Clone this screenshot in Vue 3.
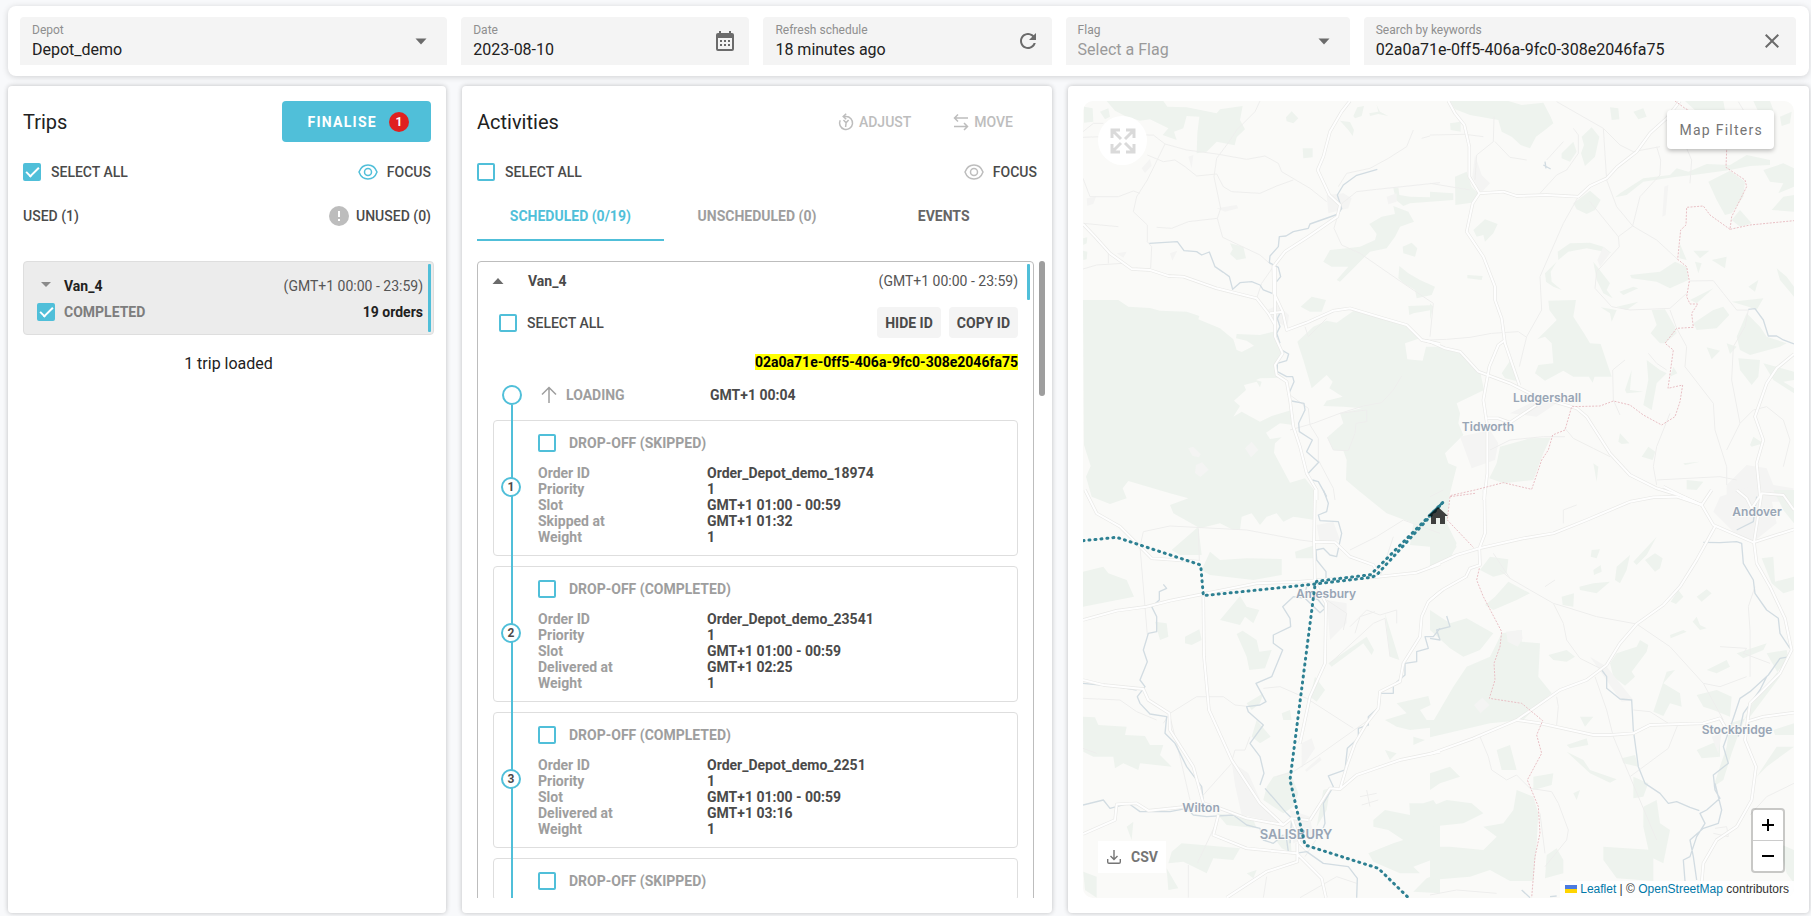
<script setup>
import { ref } from 'vue'

const depot = ref('Depot_demo')
const date = ref('2023-08-10')
const refreshed = ref('18 minutes ago')
const flag = ref('')
const keywords = ref('02a0a71e-0ff5-406a-9fc0-308e2046fa75')
const tripsAll = ref(true)
const tripChecked = ref(true)
const activitiesAll = ref(false)
const vanAll = ref(false)

const steps = ref([
  { n: 1, state: 'SKIPPED', order: 'Order_Depot_demo_18974', verb: 'Skipped at', at: 'GMT+1 01:32', checked: false },
  { n: 2, state: 'COMPLETED', order: 'Order_Depot_demo_23541', verb: 'Delivered at', at: 'GMT+1 02:25', checked: false },
  { n: 3, state: 'COMPLETED', order: 'Order_Depot_demo_2251', verb: 'Delivered at', at: 'GMT+1 03:16', checked: false },
  { n: 4, state: 'SKIPPED', order: '', verb: '', at: '', checked: false },
])

const towns = [
  { name: 'Ludgershall', x: 464, y: 301, size: 12 },
  { name: 'Tidworth', x: 405, y: 330, size: 12 },
  { name: 'Andover', x: 674, y: 415, size: 12 },
  { name: 'Amesbury', x: 243, y: 497, size: 12 },
  { name: 'Stockbridge', x: 654, y: 633, size: 12 },
  { name: 'Wilton', x: 118, y: 711, size: 12 },
  { name: 'SALISBURY', x: 213, y: 738, size: 13 },
]

// Map tiles, each drawn on a grid three times finer than the map's own units.
const tiles = [
  {
    at: 'translate(-23 -21) scale(0.33333)',
    urban: 'M800 345l50 -5 25 15 -10 30 -60 15zM622 690l30 -15 35 30 -5 40 -45 -30zM385 1105l15-5 22 22-5 10-20-5zM555 1105l20-20 20 25-22 22zM408 1155l18-8 20 22-25 22-16-12zM80 355l28-5-8 22-18 5zM245 265l25-28 5 20-20 22zM470 385l60-10 5 10-40 10zM170 520l30-5-10 18zM330 520l22-8-15 30zM980 350l30-10 0 25-25 8zM385 230l15-5-5 40z',
    wood: 'M140 63L310 63L322 80L380 82L470 100L480 88L548 78L540 120L555 148L530 172L524 196L470 185L440 215L410 220L412 160L418 110L380 108L370 145L342 155L350 180L308 165L325 145L270 118L240 122L200 110L165 92ZM72 80L98 85L100 125L72 128ZM120 95L145 85L150 110L135 118ZM678 112L695 94L715 115L700 130L680 124ZM728 205L758 205L758 232L730 235ZM880 108L892 82L912 78L905 108L885 115ZM840 122L870 126L882 150L878 168L865 150ZM928 100L955 95L950 75L960 95L985 108L955 102L930 108ZM928 432L965 410L1005 402L1000 378L1045 395L1062 425L1020 440L1005 470L980 505L930 515L905 540L870 575L840 605L830 600L865 560L815 560L790 545L810 510L860 505L900 500L945 480L950 462ZM1000 325L1015 322L1018 345L1050 350L1110 352L1110 365L1050 370L1030 378L1008 360ZM1028 500L1055 488L1072 505L1065 530L1030 520ZM1018 558L1045 580L1080 600L1125 620L1115 645L1070 655L1065 630L1030 610L1015 595ZM510 490L550 500L558 535L530 540L510 522L518 508ZM722 680L755 650L798 660L785 695L750 695ZM1045 678L1110 676L1115 690L1060 700L1048 705ZM69 475L82 472L80 490L70 495ZM69 512L82 515L80 538L70 540ZM69 660L175 660L205 680L270 684L300 692L380 695L418 708L415 718L480 745L520 778L530 810L545 816L582 797L560 782L528 775L530 762L600 765L640 755L650 770L668 822L643 855L650 880L675 893L600 895L588 900L605 905L600 922L590 905L552 915L558 930L522 962L540 978L520 1010L545 995L600 1025L635 1008L695 990L700 1035L660 1030L618 1058L630 1077L665 1072L645 1090L642 1118L690 1208L735 1195L770 1240L765 1320L700 1310L670 1325L650 1300L620 1310L600 1335L575 1300L545 1310L540 1350L520 1350L480 1330L420 1345L340 1300L330 1275L385 1255L330 1240L205 1203L188 1225L200 1255L150 1272L95 1250L78 1190L92 1158L72 1095ZM712 785L760 740L800 722L830 728L880 693L960 715L1040 738L1080 775L1035 790L1042 838L1088 842L1098 800L1140 800L1200 820L1262 882L1272 930L1190 970L1200 1000L1195 1030L1210 1065L1155 1120L1165 1150L1190 1160L1170 1240L1160 1330L1190 1390L1170 1440L1110 1400L1050 1395L1060 1330L980 1300L900 1235L858 1200L860 1140L850 1112L820 1110L802 1072L850 1030L840 1000L905 985L850 980L790 978L800 962L848 950L808 925L818 905L800 885L755 925L730 840Z',
    lane: 'M69 155L100 130L130 130M69 172L265 165L280 165L315 192L380 210L470 222L560 238L615 228L655 250L665 275L750 325L800 365M600 63L585 95L530 150L500 195L470 235L462 290L482 385L472 415L385 425L335 445L290 442M315 192L262 300L230 350L220 395L262 435L262 485L275 500L272 565M69 295L90 350L175 350L220 333L240 340M262 225L310 245L345 240L375 260L410 288L470 282L490 320L515 335L600 340L650 318L700 300M472 415L488 472L600 525L640 560L605 610L590 655M1110 168L1085 175M1060 150L1040 200L985 235L930 265L860 280L835 320M840 375L890 335L950 328L1140 308M832 410L822 445L845 495L900 520L1030 610L1120 670L1110 770M69 430L175 440M69 567L110 555L190 550M145 520L145 550M690 1050L760 1030L840 1000L910 978L965 968L1000 930L1025 888M690 945L745 985L750 1035L775 1075L775 1140L820 1225L825 1260M735 740L745 770L800 715M802 1072L820 1110L865 1112L885 1060L888 1030L920 1025L920 990L840 1000',
    road: 'M69 432L105 470L150 520L215 567L270 570L325 588L370 590L470 625L590 655L625 700L645 735L645 770L668 820L645 855L650 885L680 905L690 960L700 1040L720 1100L740 1180L770 1230L770 1260M870 63L845 95L810 155L790 230L773 270L808 345L840 375L832 410L745 470L675 515L640 560L642 640L668 695L680 750L740 728L820 692L870 685L960 712L1040 735L1085 780L1140 792M630 700L668 695M645 560L645 735',
    river: 'M952 268L890 286L850 315L832 345L845 385L835 402L750 432L745 445L700 455L678 468L658 470L655 500L630 528L628 548L655 562L662 590L650 605M268 490L352 485L372 512L410 515L425 525L448 516L465 560L490 577L508 590L518 628L540 608L575 605L600 615L610 630L637 640M645 645L665 690L652 715L660 740L650 760L660 790M668 812L686 822L680 842L652 850L652 875L680 890L698 890L702 905L685 945M695 963L732 970L735 990L716 1030L718 1055L757 1080L740 1115L776 1147L745 1180M757 1200L775 1205L800 1250',
    border: '',
  },
  {
    at: 'translate(347 -21) scale(0.33333)',
    urban: 'M135 225l20 60 25 25 -28 30 -25 -50zM703 320l12-5 -8 90 -10 5zM90 1070l90 -20 25 40 -10 50 -70 25zM240 1000l80 -40 60 10 -60 40zM890 1215l60 -60 60 10 20 50 60 10 0 40 -200 0zM520 500l20 20 -30 40-8-20z',
    wood: 'M60 63L235 63L275 75L340 68L362 110L370 130L345 150L318 170L300 205L272 195L245 170L215 155L205 120L120 105L75 88ZM60 130L92 125L92 155L62 150ZM75 290L110 275L125 320L148 345L125 368L76 375ZM0 335L70 340L70 360L0 365ZM395 220L430 185L440 215L420 245L395 235ZM455 170L485 142L508 170L495 230L465 258L453 220L462 195ZM430 370L480 332L512 360L495 390L470 402L440 388ZM540 82L565 85L568 118L545 120ZM610 95L640 85L650 110L625 118ZM765 63L880 63L885 90L800 95ZM970 63L1020 63L1030 90L1015 110L985 95ZM1050 110L1085 95L1080 130L1055 138ZM570 340L640 295L720 285L740 265L775 275L830 252L900 255L950 225L1020 240L1020 255L960 258L900 270L790 285L740 290L640 305L590 345L555 352ZM835 305L900 272L945 305L940 350L905 400L885 405L860 360ZM1000 270L1060 250L1092 265L1092 320L1045 340L1060 310L1020 305ZM1060 350L1092 345L1092 395L1025 390ZM905 420L930 390L965 430L930 440ZM130 450L165 418L203 432L190 460L165 485L160 465L140 470ZM383 515L420 490L480 488L520 500L545 520L470 505L415 515L385 540ZM345 580L380 545L362 575L365 605L395 630L370 620L348 605ZM490 545L540 610L530 630L548 655L520 640L500 600ZM568 635L610 620L625 625L580 645ZM600 585L690 575L735 545L770 560L775 600L720 625L680 605L605 595ZM560 680L625 665L590 690ZM355 662L438 660L430 710L462 760L480 790L512 792L545 890L430 890L400 872L345 902L315 880L325 855L370 850L365 790L345 770L322 778L360 740L380 720L358 690ZM512 682L560 690L545 725L540 700ZM665 690L705 688L735 740L740 760L705 790L690 790L662 760L680 735ZM790 512L838 512L810 535ZM845 540L890 530L885 565ZM795 545L815 550L805 580ZM750 492L770 540L748 535ZM1040 565L1070 590L1092 620L1092 650L1050 600ZM955 620L985 600L975 635ZM905 665L1000 655L980 690L955 680ZM780 660L850 625L800 670ZM790 730L850 690L880 680L898 705L860 745L800 750ZM920 770L950 700L990 740L1010 770L1070 790L1050 800L960 825L930 810ZM925 835L990 840L985 890L965 915L930 870ZM830 802L870 812L845 838ZM890 790L920 800L900 822ZM1000 850L1092 875L1092 900L1060 905L1092 925L1092 940L1030 900ZM650 840L690 870L710 880L680 910L665 990L640 975L655 900ZM720 890L730 860L742 880ZM585 930L605 870L600 930L640 935L590 940ZM430 890L470 862L495 885L488 908L470 880ZM215 880L245 835L268 905L225 895ZM210 1100L300 1075L362 1073L340 1120L310 1200L220 1210L178 1195L200 1150ZM565 1085L570 1060L598 1090L575 1092ZM635 1130L655 1100L676 1115L668 1140ZM760 1150L810 1145L765 1155ZM960 1095L970 1070L1000 1090L965 1100ZM770 1200L820 1205L800 1230L770 1228ZM490 1150L505 1160L500 1205ZM112 585L158 588L155 600L112 595ZM0 670L10 680L0 720Z',
    lane: 'M0 165L105 163L160 170M192 110L190 185L140 225L135 300M195 185L240 232L290 240M400 185L350 240M380 65L450 105L520 145L570 195L610 215L690 200M430 145L445 165L445 220L410 270L380 285L330 340M520 145L530 300L560 380L608 438L565 470L480 365M608 438L630 350L690 285L692 240L680 200M608 438L680 480L745 540M445 350L400 430L330 590L335 690L290 770L268 860M565 470L568 500L500 575L495 625L545 680L600 690L720 685L770 640M0 780L50 778L120 772L185 760L265 755L290 772M778 603L850 602L880 640L920 690L955 690M955 690L945 740L910 800L905 900L930 1030L890 1110M740 745L770 800L765 860L850 970L855 1050L890 1160L890 1215M720 690L740 745M655 820L680 850L710 870M550 960L548 870L585 840M550 960L570 1005M720 1000L680 1100L670 1160L680 1215M930 1030L970 990L1010 980L1060 1020L1080 1080L1060 1160M405 1045L430 1075L490 1105L540 1130M180 1110L240 1080L340 1070L405 1070M680 1200L870 1190L920 1200M770 205L785 240L780 310M0 310L120 330M925 65L940 90',
    road: 'M-12 782L0 785L45 805L90 815L145 875L240 910L320 950L440 985L470 1010L540 1120L600 1185L680 1225L760 1250L815 1275M55 63L75 100L103 135L118 200L118 290L148 340L128 370L110 455L160 530L195 620L195 660L215 715L225 790L268 915M148 340L220 335L260 348L350 345L445 350L480 318L530 295L560 262L620 215L660 160L710 115L750 63M225 780L205 795L178 860L160 960L172 1040L172 1180L162 1260M172 1015L205 1015L240 1028L320 975M1092 822L1040 865L1010 910L975 1010L1000 1080L980 1150L990 1250',
    river: 'M345 245L348 265M340 255L362 267M955 688L975 686L1000 720L1015 768L1040 768L1060 780L1092 792',
    border: 'M735 63L765 85L830 120L890 210L888 262L945 300L950 320L905 410L900 448L960 435L1092 422M900 448L840 405L820 378L770 382L768 435L752 450L743 538L770 560L778 603L770 650L780 672L803 672L785 700L790 742L740 745L705 790L730 810L714 925L758 915L750 965L735 1010L695 1035L640 1005L600 975L550 963L510 978L425 980L405 1050L368 1065L355 1110L335 1140L305 1228L220 1208L135 1230L60 1247',
  },
  {
    at: 'translate(-23 389) scale(0.33333)',
    urban: 'M770 105l50 -10 20 55 -60 10zM515 815l50 35 40 90 60 60 -120 -25 -20 -90zM735 840l45 -40 5 10 -45 35zM800 330l60 10 0 60 -50 50zM690 960l60 20 10 60 -60 20zM725 760l30-15 10 30-40 60z',
    wood: 'M69 245L130 230L145 250L200 270L222 320L69 350ZM335 180L415 110L425 195L360 195ZM425 240L450 185L480 210L560 205L665 207L665 255L580 270L450 255ZM705 185L765 165L765 205L708 205ZM480 390L540 318L560 350L598 360L580 400L555 380L540 405ZM530 432L548 422L590 450L598 485L635 480L615 535L568 540L560 500ZM375 440L418 418L425 450L395 465L375 460ZM285 395L320 400L325 440L300 450ZM805 520L920 440L942 480L935 495L910 460L815 530ZM975 370L1018 510L990 500ZM765 560L795 600L770 635L750 620ZM69 680L105 682L115 705L200 710L195 735L255 738L270 765L310 765L300 795L335 830L240 820L235 840L190 820L165 835L160 800L100 800L70 785ZM590 690L632 740L600 760L575 740ZM560 640L610 610L600 640L575 660ZM665 670L690 660L695 690L670 690ZM640 860L690 845L715 910L700 950L670 970L610 930L620 890ZM790 900L810 895L800 960L770 1010ZM470 970L580 990L590 1015L500 1005ZM640 1040L690 1030L695 1090L665 1075ZM335 1085L365 1060L540 1075L520 1110L460 1105L440 1150L370 1115L325 1120ZM200 1010L220 995L215 1050ZM70 1145L110 1160L110 1223L75 1200ZM320 1135L355 1195L325 1200ZM560 1150L590 1140L580 1165ZM940 990L975 960L1050 975L1048 940L1090 940L1120 930L1140 960L1140 1100L1060 1130L1080 1150L1020 1150L940 1115L925 1090L1000 1060L1030 1050L985 1020L940 1010ZM1010 640L1105 618L1112 645L1080 660L1100 690L1140 690L1140 710L1050 720L1010 710L975 690L1040 670ZM975 780L1010 790L990 810ZM1060 740L1095 750L1060 765ZM1100 1165L1140 1150L1140 1210L1060 1205Z',
    lane: 'M262 435L240 170L250 125L330 108L560 120L720 150L760 155M415 115L418 215M870 180L950 140L1030 90L1140 130M960 262L1000 140M310 700L330 670L410 620L490 620L525 645L570 650M610 595L660 590L740 625L880 715M925 690L770 800L700 845L650 860M430 915L515 820M515 815L525 780L555 780L570 740M69 625L180 630L230 665L290 690M330 680L360 800L390 930M412 1120L475 985M385 1125L385 1223M610 1223L620 1160M735 1100L780 1030M69 775L110 790M870 410L920 360L960 375L1010 360L1010 400M885 430L900 380L945 365M810 520L940 400L975 385L990 500M900 920L950 910M905 945L955 930M920 900L930 950M800 330L860 370L850 420M720 1223L830 1160L890 1180',
    road: 'M69 390L170 362L260 350L330 332L430 312L590 280L720 275L800 268L940 262L1070 248L1140 222M765 0L762 150L765 280L798 340L795 520L750 620L720 760M430 320L432 500L447 660L515 810L600 940L670 1005M69 570L130 585L250 597L265 630L328 670L330 720L400 830L430 940L480 955L560 985L670 1005L695 985L745 990M69 1032L165 990L170 943L230 940L265 962L430 945M75 0L110 70L180 110L240 170L275 205L420 215M760 155L825 157L870 200L940 225L960 262M475 975L460 1035L560 1075L710 1090L785 1165L798 1223M500 1223L620 1145L712 1115L712 1060M1140 305L1105 335L1085 380L1080 440L1030 520L1020 575L960 605L955 655L920 700L885 760L860 830L840 898L810 895L750 990M840 898L890 855L1020 810L1140 785M695 985L720 1060L740 1080',
    river: 'M790 0L805 40L800 65L775 75L780 92L835 95L845 130L830 200L810 195L790 175L768 180L770 210L798 245L798 265M740 290L735 310L775 330L795 355L780 368L735 325L700 320L668 350L690 385L692 410L640 435L640 460L668 480L635 560L588 580L618 635L600 645L560 650L565 665L610 705L570 760L600 800L612 850L600 885M615 895L680 970L695 985L690 1060M310 283L320 295L298 305L298 330L275 350L290 380L290 425L265 430L250 480L262 515L240 570L255 590L232 620L240 640L270 672L320 680L315 730L345 760L380 830L425 890L430 935M69 945L130 930L150 955L205 940L240 965L330 965L380 955L400 975L440 980L520 975L560 1005L600 1015L610 1050L640 1060L670 1035M680 1050L685 1085L705 1090L740 1085L790 1120L865 1130L892 1165L890 1223M1140 415L1120 440L1095 440L1105 475L1070 485L1070 515L1035 520L1035 555L1000 585L1000 610L960 610L958 650L925 680L925 705L895 715L895 745L862 775L855 840L805 858L820 890L790 940L795 1000L780 1040M69 580L170 590L230 600',
    border: '',
  },
  {
    at: 'translate(347 389) scale(0.33333)',
    urban: 'M228 425l45 -5 5 25 -15 25 -30 -15zM132 645l25-22 22 22-28 25zM870 20l90-30 60 20 20 90-70 55-60-30-60-60zM480 500l50 30 80 100 -35 5zM845 740l30-10-10 60z',
    wood: 'M1030 0L1092 0L1092 100L1060 60ZM0 50L50 100L80 170L60 200L0 230ZM180 200L235 208L230 250L190 260L150 240ZM195 320L235 275L300 310L260 330L190 360L165 345ZM0 360L60 400L110 385L190 430L150 480L100 500L60 475L0 420ZM275 420L275 455L330 460L325 560L365 610L330 640L280 690L180 700L0 742L0 710L70 590L110 530L180 500L215 430ZM355 495L410 480L435 500L410 515L370 510ZM395 320L432 310L430 350L398 345ZM448 290L490 280L540 275L500 310L450 300ZM485 180L510 178L500 205L482 200ZM555 270L560 230L600 195L590 240L570 280ZM610 215L680 140L650 195L620 225ZM645 210L675 190L698 205L690 235L675 245ZM490 240L512 225L515 245L492 255ZM800 320L830 298L845 310L815 335ZM788 395L800 380L810 405L830 415L810 420ZM720 435L760 420L770 425L722 445ZM745 300L760 320L738 342L722 335ZM540 520L560 490L620 470L630 450L655 465L650 485L605 545L615 560L585 587L550 560ZM995 205L1030 200L1035 275L1092 260L1092 300L1060 310L1025 280ZM670 665L710 545L735 540L700 580L750 610L755 650L720 640L700 678ZM800 615L860 600L905 620L900 680L850 660L820 650ZM830 540L890 510L900 530L860 550ZM920 490L1010 460L1000 480L940 505ZM960 680L1050 560L1010 490L1070 480L1075 505L960 650L930 720L905 790L880 870L850 890L890 770L900 700ZM800 780L870 750L870 800L815 805ZM410 765L470 745L475 765L420 775ZM410 785L460 810L480 840L560 868L540 878L480 850ZM575 805L615 795L625 830L580 820ZM610 860L655 880L640 920L610 925ZM640 950L680 930L690 1000L720 1020L700 1120L660 1100L640 1010ZM260 900L310 920L325 970L320 1060L310 1173L240 1173L180 1140L120 1160L0 1170L0 1070L60 1070L160 1080L200 1040L160 1010L220 1000L250 960ZM0 950L50 930L125 940L160 970L100 1000L0 1010ZM0 850L60 830L90 860L30 880L0 900ZM200 780L240 765L260 840L215 840ZM310 860L370 850L365 885L310 900ZM450 680L490 680L465 710ZM350 1095L380 1075L400 1110L400 1150L345 1165ZM520 1070L670 1080L670 1173L560 1165L520 1110ZM1030 720L1092 700L1092 735L1035 735ZM1040 770L1092 770L1010 830L980 860ZM430 910L450 900L440 930ZM1045 1060L1092 1080L1092 1180L1070 1150Z',
    lane: 'M400 100L400 60L440 45M190 190L240 265L300 300L370 340L400 400L410 450L450 505L520 540M370 340L420 355L500 380L620 402M620 402L720 470L820 580L880 690M495 560L530 660L550 740L600 860L680 1050M260 690L150 740L175 800L185 840L230 870L260 855L300 895L365 905L385 940L415 1020L410 1050L345 1130M330 970L345 1090M610 660L660 665L715 700M745 700L715 775L600 860M380 620L385 650L380 705M960 560L960 420L955 350L975 290M1092 880L1010 920L960 975M855 1015L890 1010L895 1040L850 1030M0 20L40 0M345 290L375 270M240 265L210 240M870 470L950 475L940 490L1020 520M820 580L870 590L950 560M200 1210L80 1200L0 1215',
    road: 'M700 -10L760 20L815 45M0 232L80 195L148 175L280 145L370 130L470 90L600 35L670 22L740 20L815 45L850 105L970 157L1092 118M163 0L165 130L148 175L150 225L120 235L108 260L40 298L0 330M855 110L800 210L750 290L700 345L620 402L570 460L530 525L470 570L390 600L260 690L130 745L0 792M260 690L330 700L490 735L540 735L610 730L660 705L820 700L870 685L885 710M950 695L1000 680L1092 668M972 157L980 220L1020 290L1065 385L1085 480L1050 550L960 640L945 750L978 830L965 930L920 1010L860 1050L820 1120L815 1180M845 0L815 45M920 0L950 25L965 55L995 10L1060 15L1092 60M995 10L972 157',
    river: 'M820 157L870 158L920 155L935 160L940 220L970 270L975 310L1010 360L1045 385L1050 430L1070 460L1080 475M920 120L970 95L980 20M1080 500L1050 505L1015 555L960 605L930 625L905 700L880 770L895 820L850 855L855 900L870 925L830 960L810 970L825 1000L800 1040L780 1100L760 1110L765 1173M855 880L875 960L865 1000L820 1015L780 1050L790 1100L800 1170M1010 560L990 600L940 670L925 740M515 540L530 560L530 595L570 627L605 630L610 720L625 830L645 880L690 910L715 940L740 935L780 952L808 962M0 445L30 450L20 420L60 410L50 378M275 1200L300 1223M360 1220L380 1218',
    border: 'M60 20L135 10M60 20L52 90L130 172M148 235L140 270L160 320L215 425L210 470L192 520L195 570L178 625L275 640L338 692L320 735L335 790L292 870L325 950L330 1030L315 1100L305 1223',
  },
]
</script>

<template>
  <div class="page">
    <header class="toolbar">
      <div class="field select-field">
        <div class="field-body">
          <label for="depot">Depot</label>
          <select id="depot" v-model="depot"><option>Depot_demo</option></select>
        </div>
        <svg class="icon" viewBox="0 0 24 24"><path d="M6.500 9.500h11l-5.500 6z" /></svg>
      </div>
      <div class="field">
        <div class="field-body">
          <label for="date">Date</label>
          <input id="date" v-model="date" type="text" />
        </div>
        <button class="icon-btn" aria-label="Open calendar">
          <svg class="icon" viewBox="0 0 24 24"><path d="M9 11v2H7v-2h2m4 0v2h-2v-2h2m4 0v2h-2v-2h2m2-7a2 2 0 0 1 2 2v14a2 2 0 0 1-2 2H5a2 2 0 0 1-2-2V6a2 2 0 0 1 2-2h1V2h2v2h8V2h2v2h1m0 16V9H5v11h14M9 15v2H7v-2h2m4 0v2h-2v-2h2m4 0v2h-2v-2h2Z" /></svg>
        </button>
      </div>
      <div class="field">
        <div class="field-body">
          <label for="refresh">Refresh schedule</label>
          <input id="refresh" v-model="refreshed" type="text" readonly />
        </div>
        <button class="icon-btn" aria-label="Refresh">
          <svg class="icon" viewBox="0 0 24 24"><path d="M17.650 6.350C16.200 4.900 14.210 4 12 4c-4.420 0-7.990 3.580-7.990 8s3.570 8 7.990 8c3.730 0 6.840-2.550 7.730-6h-2.080c-.82 2.330-3.040 4-5.650 4-3.310 0-6-2.690-6-6s2.690-6 6-6c1.660 0 3.140.69 4.220 1.780L13 11h7V4l-2.350 2.350z" /></svg>
        </button>
      </div>
      <div class="field select-field">
        <div class="field-body">
          <label for="flag">Flag</label>
          <select id="flag" v-model="flag" class="empty"><option value="">Select a Flag</option></select>
        </div>
        <svg class="icon" viewBox="0 0 24 24"><path d="M6.500 9.500h11l-5.500 6z" /></svg>
      </div>
      <div class="field">
        <div class="field-body">
          <label for="keywords">Search by keywords</label>
          <input id="keywords" v-model="keywords" type="text" />
        </div>
        <button class="icon-btn" aria-label="Clear search">
          <svg class="icon" viewBox="0 0 24 24"><path d="M19 6.410L17.590 5 12 10.590 6.410 5 5 6.410 10.590 12 5 17.590 6.410 19 12 13.410 17.590 19 19 17.590 13.410 12z" /></svg>
        </button>
      </div>
    </header>

    <main class="columns">
      <section class="panel">
        <div class="panel-head">
          <h2>Trips</h2>
          <button class="finalise">FINALISE <span class="count">1</span></button>
        </div>
        <div class="line-row">
          <label class="check"><input v-model="tripsAll" type="checkbox" />SELECT ALL</label>
          <button class="text-btn focus on">
            <svg viewBox="0 0 20 16"><path d="M1 8C2.600 3.600 6 1 10 1s7.400 2.600 9 7c-1.600 4.400-5 7-9 7s-7.400-2.600-9-7z" /><circle cx="10" cy="8" r="3.500" /></svg>
            FOCUS
          </button>
        </div>
        <div class="line-row used-row">
          <button class="text-btn">USED (1)</button>
          <button class="text-btn unused">
            <svg viewBox="0 0 20 20"><circle cx="10" cy="10" r="10" fill="#bdbdbd" /><path d="M9 5h2v6H9zM9 13h2v2H9z" fill="#fff" /></svg>
            UNUSED (0)
          </button>
        </div>
        <div class="trip-list">
          <article class="trip">
            <button class="caret-btn" aria-label="Expand Van_4"><svg class="icon" viewBox="0 0 24 24"><path d="M7 8h10l-5 5z" /></svg></button>
            <strong>Van_4</strong>
            <span class="hours">(GMT+1 00:00 - 23:59)</span>
            <input id="trip-check" v-model="tripChecked" type="checkbox" />
            <label for="trip-check" class="state">COMPLETED</label>
            <strong class="orders">19 orders</strong>
          </article>
          <p class="loaded">1 trip loaded</p>
        </div>
      </section>

      <section class="panel activities">
        <div class="panel-head">
          <h2>Activities</h2>
          <div class="actions">
            <button class="text-btn" disabled>
              <svg viewBox="0 0 16 18"><path d="M5.500 3.500H8A6.500 6.500 0 1 1 2.200 7.200M8.200.8L5.200 3.500l3 2.800M5.500 7l2.600 2.800L7.600 14M10.600 7L8.100 9.800" /></svg>
              ADJUST
            </button>
            <button class="text-btn" disabled>
              <svg viewBox="0 0 16 18"><path d="M15 5H1.500M5 1.500L1.500 5L5 8.500M1 13.500h13.500M11 10l3.500 3.500L11 17" /></svg>
              MOVE
            </button>
          </div>
        </div>
        <div class="line-row">
          <label class="check"><input v-model="activitiesAll" type="checkbox" />SELECT ALL</label>
          <button class="text-btn focus">
            <svg viewBox="0 0 20 16"><path d="M1 8C2.600 3.600 6 1 10 1s7.400 2.600 9 7c-1.600 4.400-5 7-9 7s-7.400-2.600-9-7z" /><circle cx="10" cy="8" r="3.500" /></svg>
            FOCUS
          </button>
        </div>
        <nav class="tabs">
          <button class="active">SCHEDULED (0/19)</button>
          <button>UNSCHEDULED (0)</button>
          <button class="dark">EVENTS</button>
        </nav>
        <div class="scroller">
          <div class="van">
            <div class="van-head">
              <button class="caret-btn" aria-label="Collapse Van_4"><svg class="icon" viewBox="0 0 24 24"><path d="M6.500 15h11L12 9z" /></svg></button>
              <strong>Van_4</strong>
              <span class="hours">(GMT+1 00:00 - 23:59)</span>
            </div>
            <div class="van-tools">
              <label class="check"><input v-model="vanAll" type="checkbox" />SELECT ALL</label>
              <button class="chip">HIDE ID</button>
              <button class="chip">COPY ID</button>
            </div>
            <div class="trip-id"><mark>{{ keywords }}</mark></div>
            <div class="timeline">
              <div class="loading">
                <span class="dot"></span>
                <span class="loading-name">
                  <svg viewBox="0 0 16 18"><path d="M8 17V2M1 8.500L8 1.500l7 7" /></svg>
                  LOADING
                </span>
                <span class="loading-time">GMT+1 00:04</span>
              </div>
              <article v-for="s in steps" :key="s.n" class="step">
                <span v-if="s.order" class="number">{{ s.n }}</span>
                <label class="check step-name"><input v-model="s.checked" type="checkbox" />DROP-OFF ({{ s.state }})</label>
                <dl v-if="s.order">
                  <dt>Order ID</dt><dd>{{ s.order }}</dd>
                  <dt>Priority</dt><dd>1</dd>
                  <dt>Slot</dt><dd>GMT+1 01:00 - 00:59</dd>
                  <dt>{{ s.verb }}</dt><dd>{{ s.at }}</dd>
                  <dt>Weight</dt><dd>1</dd>
                </dl>
              </article>
            </div>
          </div>
          <div class="thumb"></div>
        </div>
      </section>

      <section class="panel">
        <div class="map">
          <svg class="canvas" viewBox="0 0 711 797" preserveAspectRatio="xMidYMid slice">
            <g v-for="t in tiles" :key="'w' + t.at" :transform="t.at">
              <path class="wood" :d="t.wood" />
              <path class="urban" :d="t.urban" />
            </g>
            <g v-for="t in tiles" :key="'r' + t.at" :transform="t.at">
              <path class="lane" :d="t.lane" />
              <path class="river" :d="t.river" />
              <path class="casing" :d="t.road" />
            </g>
            <g v-for="t in tiles" :key="'c' + t.at" :transform="t.at">
              <path class="surface" :d="t.road" />
              <path class="border" :d="t.border" />
            </g>
            <text v-for="t in towns" :key="t.name" class="town" :x="t.x" :y="t.y" :font-size="t.size">{{ t.name }}</text>
            <g transform="translate(-23 389) scale(0.33333)">
              <path class="route" d="M69 152L170 142L422 225L430 317L765 282L935 262L950 255L1148 38" />
              <path class="route" d="M1148 38L932 254L770 274L765 285L690 870L735 1065L955 1135L1045 1223" />
              <path class="route-end" d="M1108 76L1148 38" />
            </g>
            <path transform="translate(343 403)" fill="#000" fill-opacity="0.74" d="M10 20v-6h4v6h5v-8h3L12 3 2 12h3v8z" />
          </svg>
          <button class="expand" aria-label="Full screen">
            <svg viewBox="0 0 26 26"><path d="M2 10V2h8M3 3l8 8M16 2h8v8M23 3l-8 8M2 16v8h8M3 23l8-8M16 24h8v-8M23 23l-8-8" /></svg>
          </button>
          <button class="filters">Map Filters</button>
          <button class="csv">
            <svg viewBox="0 0 14 14"><path d="M7 0v9M3.500 6L7 9.500L10.500 6M.7 9v3q0 1.300 1.300 1.300h10q1.300 0 1.300-1.300V9" /></svg>
            CSV
          </button>
          <div class="zoom">
            <button aria-label="Zoom in"><svg viewBox="0 0 12 12"><path d="M6 0v12M0 6h12" /></svg></button>
            <button aria-label="Zoom out"><svg viewBox="0 0 12 12"><path d="M0 6h12" /></svg></button>
          </div>
          <div class="credit">
            <a href="#"><svg viewBox="0 0 12 8"><path fill="#4c7be1" d="M0 0h12v4H0z" /><path fill="#ffd500" d="M0 4h12v4H0z" /></svg>Leaflet</a> | © <a href="#">OpenStreetMap</a> contributors
          </div>
        </div>
      </section>
    </main>
  </div>
</template>

<style>
body {
  background: #f8f9fb;
}
</style>

<style scoped>
.page {
  box-sizing: border-box;
  height: 100vh;
  padding: 6px 2px 3px 8px;
  display: flex;
  flex-direction: column;
  gap: 10px;
  overflow: hidden;
  font-family: Roboto, "Liberation Sans", sans-serif;
  font-size: 14px;
  line-height: 16px;
  color: #4a4a4a;
}
.page *,
.page *::before,
.page *::after {
  box-sizing: border-box;
}
button,
input,
select {
  font: inherit;
  color: inherit;
  border: 0;
  padding: 0;
  margin: 0;
  background: none;
}
h2,
p,
dl,
dd {
  margin: 0;
}
.icon {
  display: block;
  width: 24px;
  height: 24px;
  flex: none;
  fill: #6b6b6b;
}
.toolbar {
  display: grid;
  grid-template-columns: 427fr 288fr 288fr 284fr 432fr;
  gap: 14px;
  padding: 11px 13px 11px 12px;
  border-radius: 8px;
  background: #fff;
  box-shadow: 0 1px 6px rgba(0, 0, 0, 0.16);
}
.field {
  display: flex;
  align-items: center;
  height: 48px;
  padding: 0 12px;
  border-radius: 4px 4px 0 0;
  background: #f4f4f4;
}
.select-field {
  padding-right: 14px;
}
.field-body {
  flex: 1;
  min-width: 0;
  display: flex;
  flex-direction: column;
  gap: 2px;
}
.field label {
  font-size: 12px;
  line-height: 16px;
  color: #8f8f8f;
}
.field input,
.field select {
  appearance: none;
  width: 100%;
  height: 20px;
  font-size: 16px;
  line-height: 20px;
  color: #212121;
}
.field select.empty {
  color: #9a9a9a;
}
.icon-btn {
  display: block;
}
.columns {
  flex: 1;
  min-height: 0;
  display: grid;
  grid-template-columns: 438fr 590fr 741fr;
  grid-template-rows: minmax(0, 1fr);
  gap: 16px;
}
.panel {
  display: flex;
  flex-direction: column;
  min-width: 0;
  min-height: 0;
  padding: 15px;
  border-radius: 4px;
  background: #fff;
  box-shadow: 0 0 5px rgba(0, 0, 0, 0.24);
}
.panel-head {
  display: flex;
  align-items: center;
  justify-content: space-between;
  height: 41px;
  flex: none;
}
h2 {
  font-size: 20px;
  line-height: 24px;
  font-weight: 400;
  color: #212121;
}
.finalise {
  display: flex;
  align-items: center;
  gap: 12px;
  height: 41px;
  padding: 0 22px 0 26px;
  border-radius: 4px;
  background: #50bfd9;
  color: #fff;
  font-weight: 700;
  letter-spacing: 0.09em;
}
.count {
  width: 20px;
  height: 20px;
  border-radius: 50%;
  background: #e02020;
  font-size: 12px;
  line-height: 20px;
  letter-spacing: 0;
  text-align: center;
}
.line-row {
  display: flex;
  align-items: center;
  justify-content: space-between;
  height: 20px;
  margin-top: 20px;
  flex: none;
}
.used-row {
  margin-top: 24px;
}
.check {
  display: flex;
  align-items: center;
  gap: 10px;
  font-weight: 500;
}
input[type='checkbox'] {
  appearance: none;
  display: block;
  position: relative;
  flex: none;
  width: 18px;
  height: 18px;
  border: 2px solid #50bfd9;
  border-radius: 2px;
}
input[type='checkbox']:checked {
  background: #50bfd9;
}
input[type='checkbox']:checked::after {
  content: '';
  position: absolute;
  left: 1px;
  top: 2px;
  width: 13px;
  height: 7px;
  border: solid #fff;
  border-width: 0 0 2px 2px;
  transform: rotate(-45deg);
}
.text-btn {
  display: flex;
  align-items: center;
  gap: 9px;
  font-weight: 500;
}
.focus svg {
  width: 20px;
  height: 16px;
  fill: none;
  stroke: #bdbdbd;
  stroke-width: 1.500;
}
.focus.on svg {
  stroke: #50bfd9;
}
.unused {
  gap: 7px;
}
.unused svg {
  width: 20px;
  height: 20px;
}
.trip-list {
  margin: 35px -3px 0 0;
}
.trip {
  position: relative;
  display: grid;
  grid-template-columns: 24px auto 1fr;
  grid-auto-rows: 26px;
  align-items: center;
  justify-items: start;
  column-gap: 6px;
  padding: 11px 10px 9px;
  border: 1px solid #dedede;
  border-radius: 4px;
  background: #ececec;
}
.trip::after,
.van-head::after {
  content: '';
  position: absolute;
  top: 2px;
  right: 2px;
  bottom: 2px;
  width: 3px;
  border-radius: 1px;
  background: #50bfd9;
}
.trip input {
  justify-self: center;
}
.trip strong {
  color: #212121;
}
.trip .hours,
.trip .orders {
  justify-self: end;
}
.trip .icon {
  fill: #8a8a8a;
}
.state {
  font-weight: 700;
  color: #7d7d7d;
}
.loaded {
  margin-top: 19px;
  text-align: center;
  font-size: 16px;
  line-height: 20px;
  color: #212121;
}
.actions {
  display: flex;
  gap: 42px;
  padding-right: 24px;
}
.actions .text-btn {
  gap: 5px;
  color: #bdbdbd;
}
.actions svg {
  width: 16px;
  height: 18px;
  fill: none;
  stroke: #bdbdbd;
  stroke-width: 1.500;
}
.tabs {
  display: grid;
  grid-template-columns: repeat(3, 1fr);
  height: 50px;
  margin-top: 9px;
  flex: none;
}
.tabs button {
  border: solid transparent;
  border-width: 2px 0;
  font-weight: 700;
  color: #9e9e9e;
}
.tabs .active {
  color: #50bfd9;
  border-bottom-color: #50bfd9;
}
.tabs .dark {
  color: #666;
}
.scroller {
  flex: 1;
  min-height: 0;
  display: flex;
  align-items: flex-start;
  gap: 5px;
  margin: 20px -8px 0 0;
  overflow: hidden;
}
.van {
  flex: 1;
  border: 1px solid #bdbdbd;
  border-radius: 4px;
}
.thumb {
  width: 6px;
  height: 135px;
  border-radius: 3px;
  background: #9e9e9e;
}
.van-head {
  position: relative;
  display: flex;
  align-items: center;
  gap: 18px;
  height: 38px;
  padding: 0 15px 0 8px;
}
.van-head::after {
  right: 3px;
  bottom: 0;
}
.hours {
  margin-left: auto;
  color: #555;
}
.van-tools {
  display: flex;
  align-items: center;
  gap: 8px;
  margin-top: 7px;
  padding: 0 15px 0 21px;
}
.van-tools .check {
  margin-right: auto;
}
.chip {
  height: 31px;
  padding: 0 8px;
  border-radius: 4px;
  background: #f4f4f4;
  font-weight: 700;
}
.trip-id {
  margin-top: 16px;
  padding-right: 15px;
  text-align: right;
  font-weight: 700;
}
.trip-id mark {
  background: #ff0;
  color: #000;
}
.timeline {
  position: relative;
  padding: 0 15px;
}
.timeline::before {
  content: '';
  position: absolute;
  z-index: 1;
  left: 33px;
  top: 35px;
  bottom: 0;
  width: 2px;
  background: #50bfd9;
}
.loading {
  display: flex;
  align-items: center;
  height: 50px;
  padding-left: 9px;
  font-weight: 700;
}
.dot,
.number {
  width: 20px;
  height: 20px;
  border: 2px solid #50bfd9;
  border-radius: 50%;
  background: #fff;
}
.loading-name {
  display: flex;
  align-items: center;
  gap: 9px;
  width: 169px;
  margin-left: 19px;
  color: #9e9e9e;
}
.loading-name svg {
  width: 16px;
  height: 18px;
  fill: none;
  stroke: #9e9e9e;
  stroke-width: 1.500;
}
.step {
  position: relative;
  margin-bottom: 10px;
  padding: 13px 12px 10px 44px;
  border: 1px solid #dedede;
  border-radius: 4px;
}
.number {
  position: absolute;
  z-index: 2;
  left: 7px;
  top: 56px;
  font-size: 12px;
  line-height: 16px;
  font-weight: 700;
  text-align: center;
}
.step-name {
  gap: 13px;
  height: 18px;
  font-weight: 700;
  color: #9e9e9e;
}
.step dl {
  display: grid;
  grid-template-columns: 169px 1fr;
  margin-top: 13px;
  font-weight: 700;
}
.step dt {
  color: #9e9e9e;
}
.map {
  position: relative;
  flex: 1;
  min-height: 0;
  overflow: hidden;
  border-radius: 10px;
  background: #fafaf8;
}
.canvas {
  position: absolute;
  inset: 0;
  width: 100%;
  height: 100%;
}
.wood {
  fill: #eef3ee;
}
.urban {
  fill: #f4f4f3;
}
.lane,
.river,
.border,
.casing,
.surface,
.route,
.route-end {
  fill: none;
  stroke-linejoin: round;
}
.lane {
  stroke: #eeeeed;
  stroke-width: 3;
}
.river {
  stroke: #d2dce2;
  stroke-width: 4;
}
.border {
  stroke: #e8bfc4;
  stroke-width: 3;
  stroke-dasharray: 6 4;
}
.casing {
  stroke: #e9e9e7;
  stroke-width: 10;
}
.surface {
  stroke: #fefefe;
  stroke-width: 6;
}
.town {
  font-family: Inter, "Open Sans", sans-serif;
  font-weight: 600;
  fill: #98a5b5;
  text-anchor: middle;
  paint-order: stroke;
  stroke: #fafaf8;
  stroke-width: 2px;
}
.route {
  stroke: #2d8092;
  stroke-width: 9;
  stroke-linecap: round;
  stroke-dasharray: 3 15;
}
.route-end {
  stroke: #2d8092;
  stroke-width: 7;
  stroke-linecap: round;
}
.expand {
  position: absolute;
  left: 15px;
  top: 15px;
  display: grid;
  place-items: center;
  width: 49px;
  height: 49px;
  border-radius: 50%;
  background: #fff;
}
.expand svg {
  width: 26px;
  height: 26px;
  fill: none;
  stroke: #dadada;
  stroke-width: 3;
}
.filters {
  position: absolute;
  top: 9px;
  right: 20px;
  height: 39px;
  padding: 0 11px 0 12px;
  border-radius: 4px;
  background: #fff;
  box-shadow: 0 2px 4px rgba(0, 0, 0, 0.25);
  letter-spacing: 0.09em;
  color: #757575;
}
.csv {
  position: absolute;
  left: 15px;
  bottom: 25px;
  display: flex;
  align-items: center;
  gap: 10px;
  height: 32px;
  padding: 0 8px 0 9px;
  background: #fff;
  font-weight: 700;
  color: #757575;
}
.csv svg {
  width: 14px;
  height: 14px;
  fill: none;
  stroke: #757575;
  stroke-width: 1.400;
}
.zoom {
  position: absolute;
  right: 9px;
  bottom: 25px;
  border: 2px solid rgba(0, 0, 0, 0.2);
  border-radius: 4px;
  background: #fff;
  background-clip: padding-box;
}
.zoom button {
  display: grid;
  place-items: center;
  width: 30px;
  height: 30px;
}
.zoom button:first-child {
  height: 31px;
  border-bottom: 1px solid #ccc;
}
.zoom svg {
  width: 12px;
  height: 12px;
  stroke: #000;
  stroke-width: 2;
}
.credit {
  position: absolute;
  right: 0;
  bottom: 0;
  padding: 0 5px;
  background: rgba(255, 255, 255, 0.8);
  font-family: "Liberation Sans", Arial, sans-serif;
  font-size: 12px;
  line-height: 17px;
  color: #333;
}
.credit svg {
  width: 12px;
  height: 8px;
  margin-right: 3px;
}
.credit a {
  color: #0078a8;
  text-decoration: none;
}
</style>
